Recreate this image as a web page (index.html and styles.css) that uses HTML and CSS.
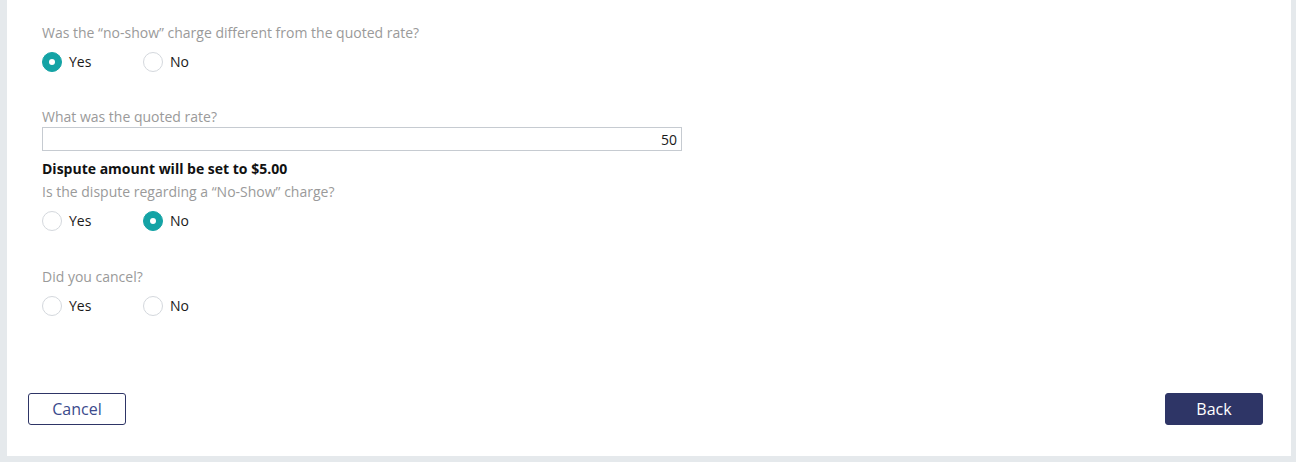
FILE: index.html
```html
<!DOCTYPE html>
<html>
  <head>
    <title>Dispute</title>
    <link rel="stylesheet" href="styles.css">
  </head>
  <body>
    <div class="card">
      <div class="form">
        <div class="question">
          <div class="label">Was the “no-show” charge different from the quoted rate?</div>
          <div class="radios">
            <label class="radio"><span class="dot checked"></span>Yes</label>
            <label class="radio"><span class="dot"></span>No</label>
          </div>
        </div>
        <div class="question">
          <div class="label">What was the quoted rate?</div>
          <input class="field" type="text" value="50">
          <div class="note">Dispute amount will be set to $5.00</div>
          <div class="label">Is the dispute regarding a “No-Show” charge?</div>
          <div class="radios">
            <label class="radio"><span class="dot"></span>Yes</label>
            <label class="radio"><span class="dot checked"></span>No</label>
          </div>
        </div>
        <div class="question last">
          <div class="label">Did you cancel?</div>
          <div class="radios">
            <label class="radio"><span class="dot"></span>Yes</label>
            <label class="radio"><span class="dot"></span>No</label>
          </div>
        </div>
      </div>
      <div class="actions">
        <button class="btn cancel">Cancel</button>
        <button class="btn back">Back</button>
      </div>
    </div>
  </body>
</html>
```

FILE: styles.css
```css
body {margin: 0; background-color: #e5e9ec; font-family: "Open Sans", sans-serif; font-size: 14px; color: #1a1a1a;}
.card {background-color: white; margin: 0 5px 6px 7px; height: 456px; box-sizing: border-box; display: flex; flex-direction: column; justify-content: space-between;}
.form {padding: 23px 0 0 35px;}
.question {margin-bottom: 35px;}
.question.last {margin-top: 36px;}
.label {color: #9a9a9a; line-height: 20px;}
.radios {display: flex; margin-top: 9px; height: 20px;}
.radio {display: flex; align-items: center; width: 101px; line-height: 20px;}
.dot {width: 18px; height: 18px; border: 1px solid #d4d8dd; border-radius: 50%; margin-right: 7px; box-sizing: content-box; display: flex; align-items: center; justify-content: center;}
.dot.checked {background-color: #14a3a5; border-color: #14a3a5;}
.dot.checked::after {content: ""; width: 6px; height: 6px; border-radius: 50%; background-color: white;}
.field {display: block; width: 640px; height: 24px; box-sizing: border-box; margin-top: 0; border: 1px solid #c6cbd1; text-align: right; font-family: "Open Sans", sans-serif; font-size: 14px; color: #1a1a1a; padding: 0 4px;}
.note {font-weight: bold; color: #111; line-height: 20px; margin-top: 8px; margin-bottom: 3px;}
.actions {display: flex; justify-content: space-between; padding: 0 28px 31px 21px;}
.btn {width: 98px; height: 32px; border-radius: 3px; font-family: "Open Sans", sans-serif; font-size: 16px; border: 1px solid #2e3566;}
.cancel {background-color: white; color: #3b4a8c;}
.back {background-color: #2e3566; color: white;}
```
